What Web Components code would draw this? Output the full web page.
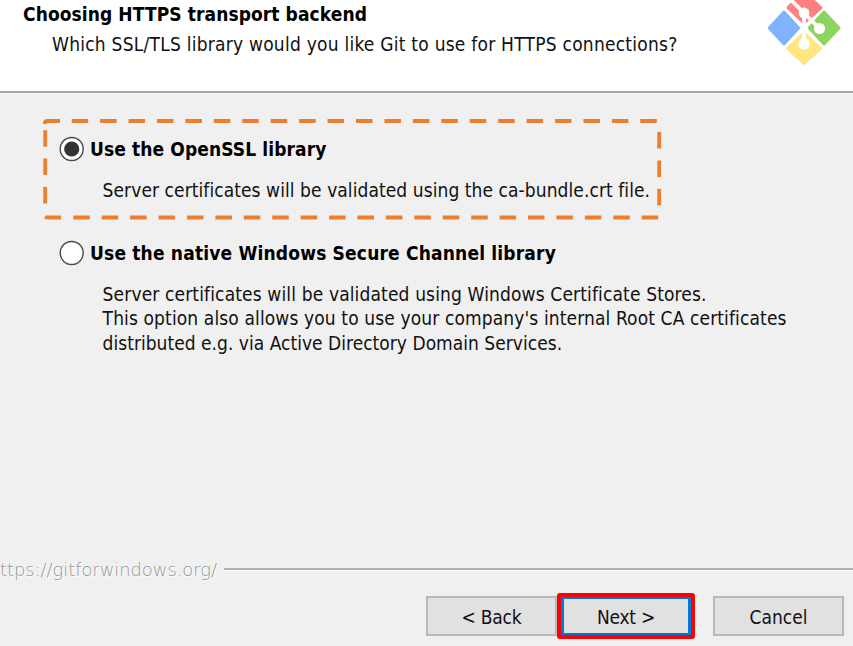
<!DOCTYPE html>
<html lang="en">
<head>
<meta charset="utf-8">
<title>Git Setup</title>
<style>
html, body { margin: 0; height: 100%; overflow: hidden; background: #f0f0f0; }
</style>
</head>
<body>
<setup-wizard></setup-wizard>
<script>
class BaseElement extends HTMLElement {
  render(html) {
    const t = document.createElement('template');
    t.innerHTML = html;
    this.attachShadow({ mode: 'open' }).append(t.content.cloneNode(true));
  }
}

/* One line of text, tracked so that it spans the width given in its "span" attribute. */
customElements.define('text-line', class extends BaseElement {
  connectedCallback() {
    if (this.shadowRoot) return;
    this.render(`<style>:host{display:block;height:24.4px;line-height:24px;white-space:pre}span{display:inline-block}</style><span><slot></slot></span>`);
    const span = this.shadowRoot.querySelector('span');
    const gap = Number(this.getAttribute('span')) - span.getBoundingClientRect().width;
    span.style.letterSpacing = gap / this.textContent.length + 'px';
  }
});

customElements.define('git-logo', class extends BaseElement {
  connectedCallback() {
    this.render(`<style>:host{display:block;width:76px;height:68px}svg{display:block}</style>
<svg width="76" height="68" viewBox="766 0 76 68">
  <g stroke-width="3" stroke-linejoin="round">
    <path fill="#80b3ff" stroke="#80b3ff" d="M769.2 28 784 12 798.6 28 784 44Z"/>
    <path fill="#ff8080" stroke="#ff8080" d="M788 7.6 804-8 821 7.8 804 23Z"/>
    <path fill="#8dd35f" stroke="#8dd35f" d="M809.2 28 824 12 839 28 824 44Z"/>
    <path fill="#ffe680" stroke="#ffe680" d="M787.6 48.4 804 33 820.6 48.4 804 63.5Z"/>
  </g>
  <path d="M792 1 819.5 28.5M804 13V43.5" fill="none" stroke="#fff" stroke-width="3.8"/>
  <g fill="#fff"><circle cx="804" cy="13" r="5.4"/><circle cx="819.5" cy="28.5" r="5.6"/><circle cx="804" cy="43.8" r="5.8"/></g>
</svg>`);
  }
});

customElements.define('wizard-header', class extends BaseElement {
  connectedCallback() {
    this.render(`<style>
:host{display:flex;justify-content:space-between;box-sizing:border-box;height:94px;background:#fff;border-bottom:1px solid #f8f8f8;box-shadow:inset 0 -2px #a5a5a5;padding:2px 11px 0 23px}
.title{font-weight:bold;color:#000}
.sub{padding:6px 0 0 29px}
git-logo{margin-top:-2px}
</style>
<div><div class="title"><slot name="title"></slot></div><div class="sub"><slot name="subtitle"></slot></div></div><git-logo></git-logo>`);
  }
});

customElements.define('radio-option', class extends BaseElement {
  connectedCallback() {
    const dot = this.hasAttribute('checked') ? '<circle cx="12.7" cy="13" r="7.6" fill="#333"/>' : '';
    this.render(`<style>
:host{display:block}
.row{display:flex;align-items:center;gap:5px;height:26px}
.label{font-weight:bold;color:#000;padding-top:1px}
.desc{padding:16.4px 0 0 43.6px}
svg{display:block}
</style>
<div class="row"><svg width="26" height="26"><circle cx="12.7" cy="13" r="11.5" fill="#fff" stroke="#484848" stroke-width="1.4"/>${dot}</svg><div class="label"><slot name="label"></slot></div></div>
<div class="desc"><slot></slot></div>`);
  }
});

customElements.define('dashed-frame', class extends BaseElement {
  connectedCallback() {
    this.render(`<style>
:host{display:block;position:relative;box-sizing:border-box;width:620px;height:102px;padding:18px 0 0 17px}
svg{position:absolute;left:0;top:0}
</style>
<svg width="620" height="102" viewBox="42 118 620 102" fill="none" stroke="#ed7d31" stroke-width="3.8">
  <path d="M45 124V123Q45 121 47.5 121H60"/>
  <path d="M71.7 121H658" stroke-dasharray="16.5 11.93"/>
  <path d="M659.2 132V206" stroke-dasharray="16.5 11.9"/>
  <path d="M45 216.8Q46 217.5 48 217.5H61"/>
  <path d="M73.3 217.5H659" stroke-dasharray="16.5 11.92"/>
  <path d="M45.2 130.2V204" stroke-dasharray="16.5 11.9"/>
</svg><slot></slot>`);
  }
});

customElements.define('push-button', class extends BaseElement {
  connectedCallback() {
    this.render(`<style>
:host{display:block;box-sizing:border-box;width:131px;height:40px}
button{box-sizing:border-box;width:100%;height:100%;display:flex;justify-content:center;align-items:center;padding:2px 0 0;margin:0;font:inherit;color:#111;background:#e1e1e1;border:2px solid #b9b9b9;border-radius:0}
:host([primary]){width:138px;height:46px;background:#fe0000;border-radius:3px;padding:4px}
:host([primary]) button{border:3px solid #0078d7;border-width:2px 3px}
</style><button><slot></slot></button>`);
  }
});

customElements.define('wizard-footer', class extends BaseElement {
  connectedCallback() {
    this.render(`<style>
:host{display:block;height:90px}
.rule{display:flex;align-items:center;height:26px}
.url{width:224px;flex:none;padding-top:2px;color:#979797;font-family:"DejaVu Sans Light","DejaVu Sans",sans-serif;font-stretch:normal;font-weight:200;font-size:18px;text-shadow:1px 1px #fff}
.line{flex:1;height:2px;background:#b1b1b1;box-shadow:0 1px #f8f8f8}
.buttons{display:flex;align-items:center;justify-content:flex-end;padding:11px 9px 0 0}
</style>
<div class="rule"><div class="url"><slot name="url"></slot></div><div class="line"></div></div>
<div class="buttons"><slot></slot></div>`);
  }
});

customElements.define('setup-wizard', class extends BaseElement {
  connectedCallback() {
    this.render(`<style>
:host{display:flex;flex-direction:column;width:853px;height:646px;overflow:hidden;background:#f0f0f0;color:#111;font:19px "DejaVu Sans Condensed","DejaVu Sans",sans-serif;font-stretch:condensed}
main{flex:1;padding:24px 0 0 42px}
.second{padding:19.5px 0 0 17px}
push-button[primary]{margin-right:18px}
</style>
<wizard-header>
  <text-line slot="title" span="344">Choosing HTTPS transport backend</text-line>
  <text-line slot="subtitle" span="625.5">Which SSL/TLS library would you like Git to use for HTTPS connections?</text-line>
</wizard-header>
<main>
  <dashed-frame>
    <radio-option checked>
      <text-line slot="label" span="236.5">Use the OpenSSL library</text-line>
      <text-line span="547.5">Server certificates will be validated using the ca-bundle.crt file.</text-line>
    </radio-option>
  </dashed-frame>
  <div class="second">
    <radio-option>
      <text-line slot="label" span="466">Use the native Windows Secure Channel library</text-line>
      <text-line span="604">Server certificates will be validated using Windows Certificate Stores.</text-line>
      <text-line span="684">This option also allows you to use your company's internal Root CA certificates</text-line>
      <text-line span="459.5">distributed e.g. via Active Directory Domain Services.</text-line>
    </radio-option>
  </div>
</main>
<wizard-footer>
  <text-line slot="url" span="217">ttps://gitforwindows.org/</text-line>
  <push-button><text-line span="60">&lt; Back</text-line></push-button>
  <push-button primary><text-line span="58">Next &gt;</text-line></push-button>
  <push-button><text-line span="58">Cancel</text-line></push-button>
</wizard-footer>`);
  }
});
</script>
</body>
</html>
